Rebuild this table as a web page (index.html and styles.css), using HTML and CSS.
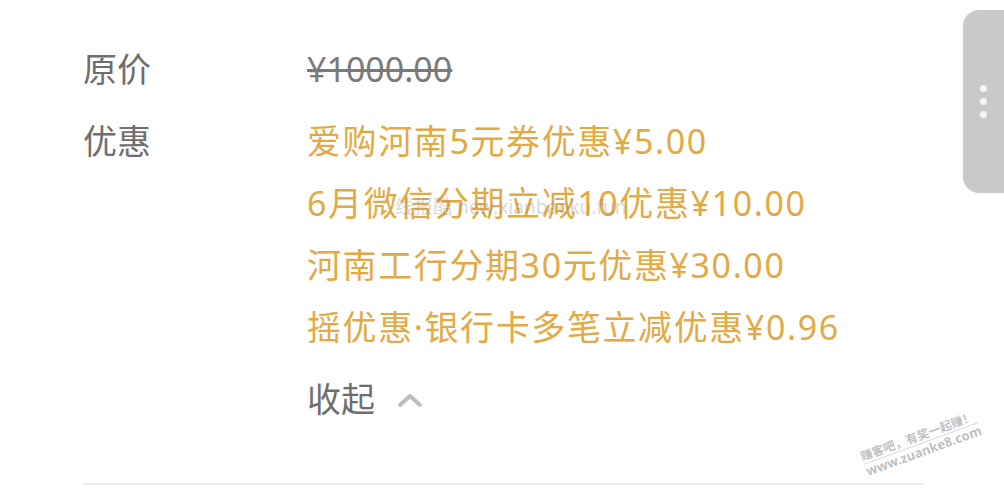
FILE: index.html
```html
<!DOCTYPE html>
<html lang="zh-CN">
<head>
    <meta charset="UTF-8">
    <meta name="viewport" content="width=device-width, initial-scale=1.0">
    <title>价格明细</title>
    <link rel="stylesheet" href="styles.css">
</head>
<body>
    <div class="page">
        <div class="detail">
            <div class="row">
                <div class="label">原价</div>
                <div class="value price">¥1000.00</div>
            </div>
            <div class="row">
                <div class="label">优惠</div>
                <div class="value">
                    <div class="discount">爱购河南5元券优惠¥5.00</div>
                    <div class="discount">6月微信分期立减10优惠¥10.00</div>
                    <div class="discount">河南工行分期30元优惠¥30.00</div>
                    <div class="discount">摇优惠·银行卡多笔立减优惠¥0.96</div>
                </div>
            </div>
            <div class="row">
                <div class="label"></div>
                <div class="value collapse">
                    <span>收起</span>
                    <svg class="chevron" width="26" height="16" viewBox="0 0 26 16">
                        <path d="M3 13 L13 4 L23 13" fill="none" stroke="#bdbdbd" stroke-width="4" stroke-linecap="round" stroke-linejoin="round"/>
                    </svg>
                </div>
            </div>
            <hr class="divider">
        </div>

        <div class="side-tab">
            <span class="dot"></span>
            <span class="dot"></span>
            <span class="dot"></span>
        </div>

        <div class="mark mark-top">线报酷 new.xianbaoku.fun</div>
        <div class="mark mark-corner">
            <div>赚客吧，有奖一起赚！</div>
            <div class="mark-url">www.zuanke8.com</div>
        </div>
    </div>
</body>
</html>
```

FILE: styles.css
```css
body {
    margin: 0;
    background-color: #ffffff;
    font-family: "Noto Sans", "Noto Sans CJK SC", sans-serif;
}
.page {
    position: relative;
    width: 1004px;
    height: 500px;
    overflow: hidden;
}
.detail {
    width: 840px;
    padding: 38px 0 0 83px;
}
.row {
    display: grid;
    grid-template-columns: 224px auto;
    margin-bottom: 10px;
}
.label {
    font-size: 34px;
    line-height: 62px;
    color: #6e6e6e;
}
.value {
    font-size: 34px;
    line-height: 62px;
}
.price {
    color: #7a7a7a;
    text-decoration: line-through;
    text-decoration-thickness: 3px;
}
.discount {
    color: #e3aa44;
    letter-spacing: 1.6px;
}
.collapse {
    display: flex;
    align-items: center;
    gap: 22px;
    color: #6e6e6e;
}
.chevron {
    margin-top: 2px;
}
.divider {
    margin: 53px 0 0;
    border: 0;
    border-top: 2px solid #ececec;
}
.side-tab {
    position: absolute;
    top: 10px;
    right: 0;
    width: 41px;
    height: 183px;
    background-color: #c9c9c9;
    border-radius: 16px 0 0 16px;
    display: flex;
    flex-direction: column;
    justify-content: center;
    align-items: center;
    gap: 6px;
}
.dot {
    width: 7px;
    height: 7px;
    border-radius: 50%;
    background-color: #f4f4f4;
}
.mark {
    position: absolute;
    color: rgba(120, 120, 120, 0.3);
    pointer-events: none;
}
.mark-top {
    left: 395px;
    top: 192px;
    font-size: 19px;
}
.mark-corner {
    left: 860px;
    top: 428px;
    font-size: 12px;
    line-height: 15px;
    transform: rotate(-20deg);
    color: rgba(110, 110, 110, 0.45);
    font-weight: bold;
}
.mark-url {
    border-top: 1px solid rgba(140, 140, 140, 0.4);
    font-size: 13px;
}
```
